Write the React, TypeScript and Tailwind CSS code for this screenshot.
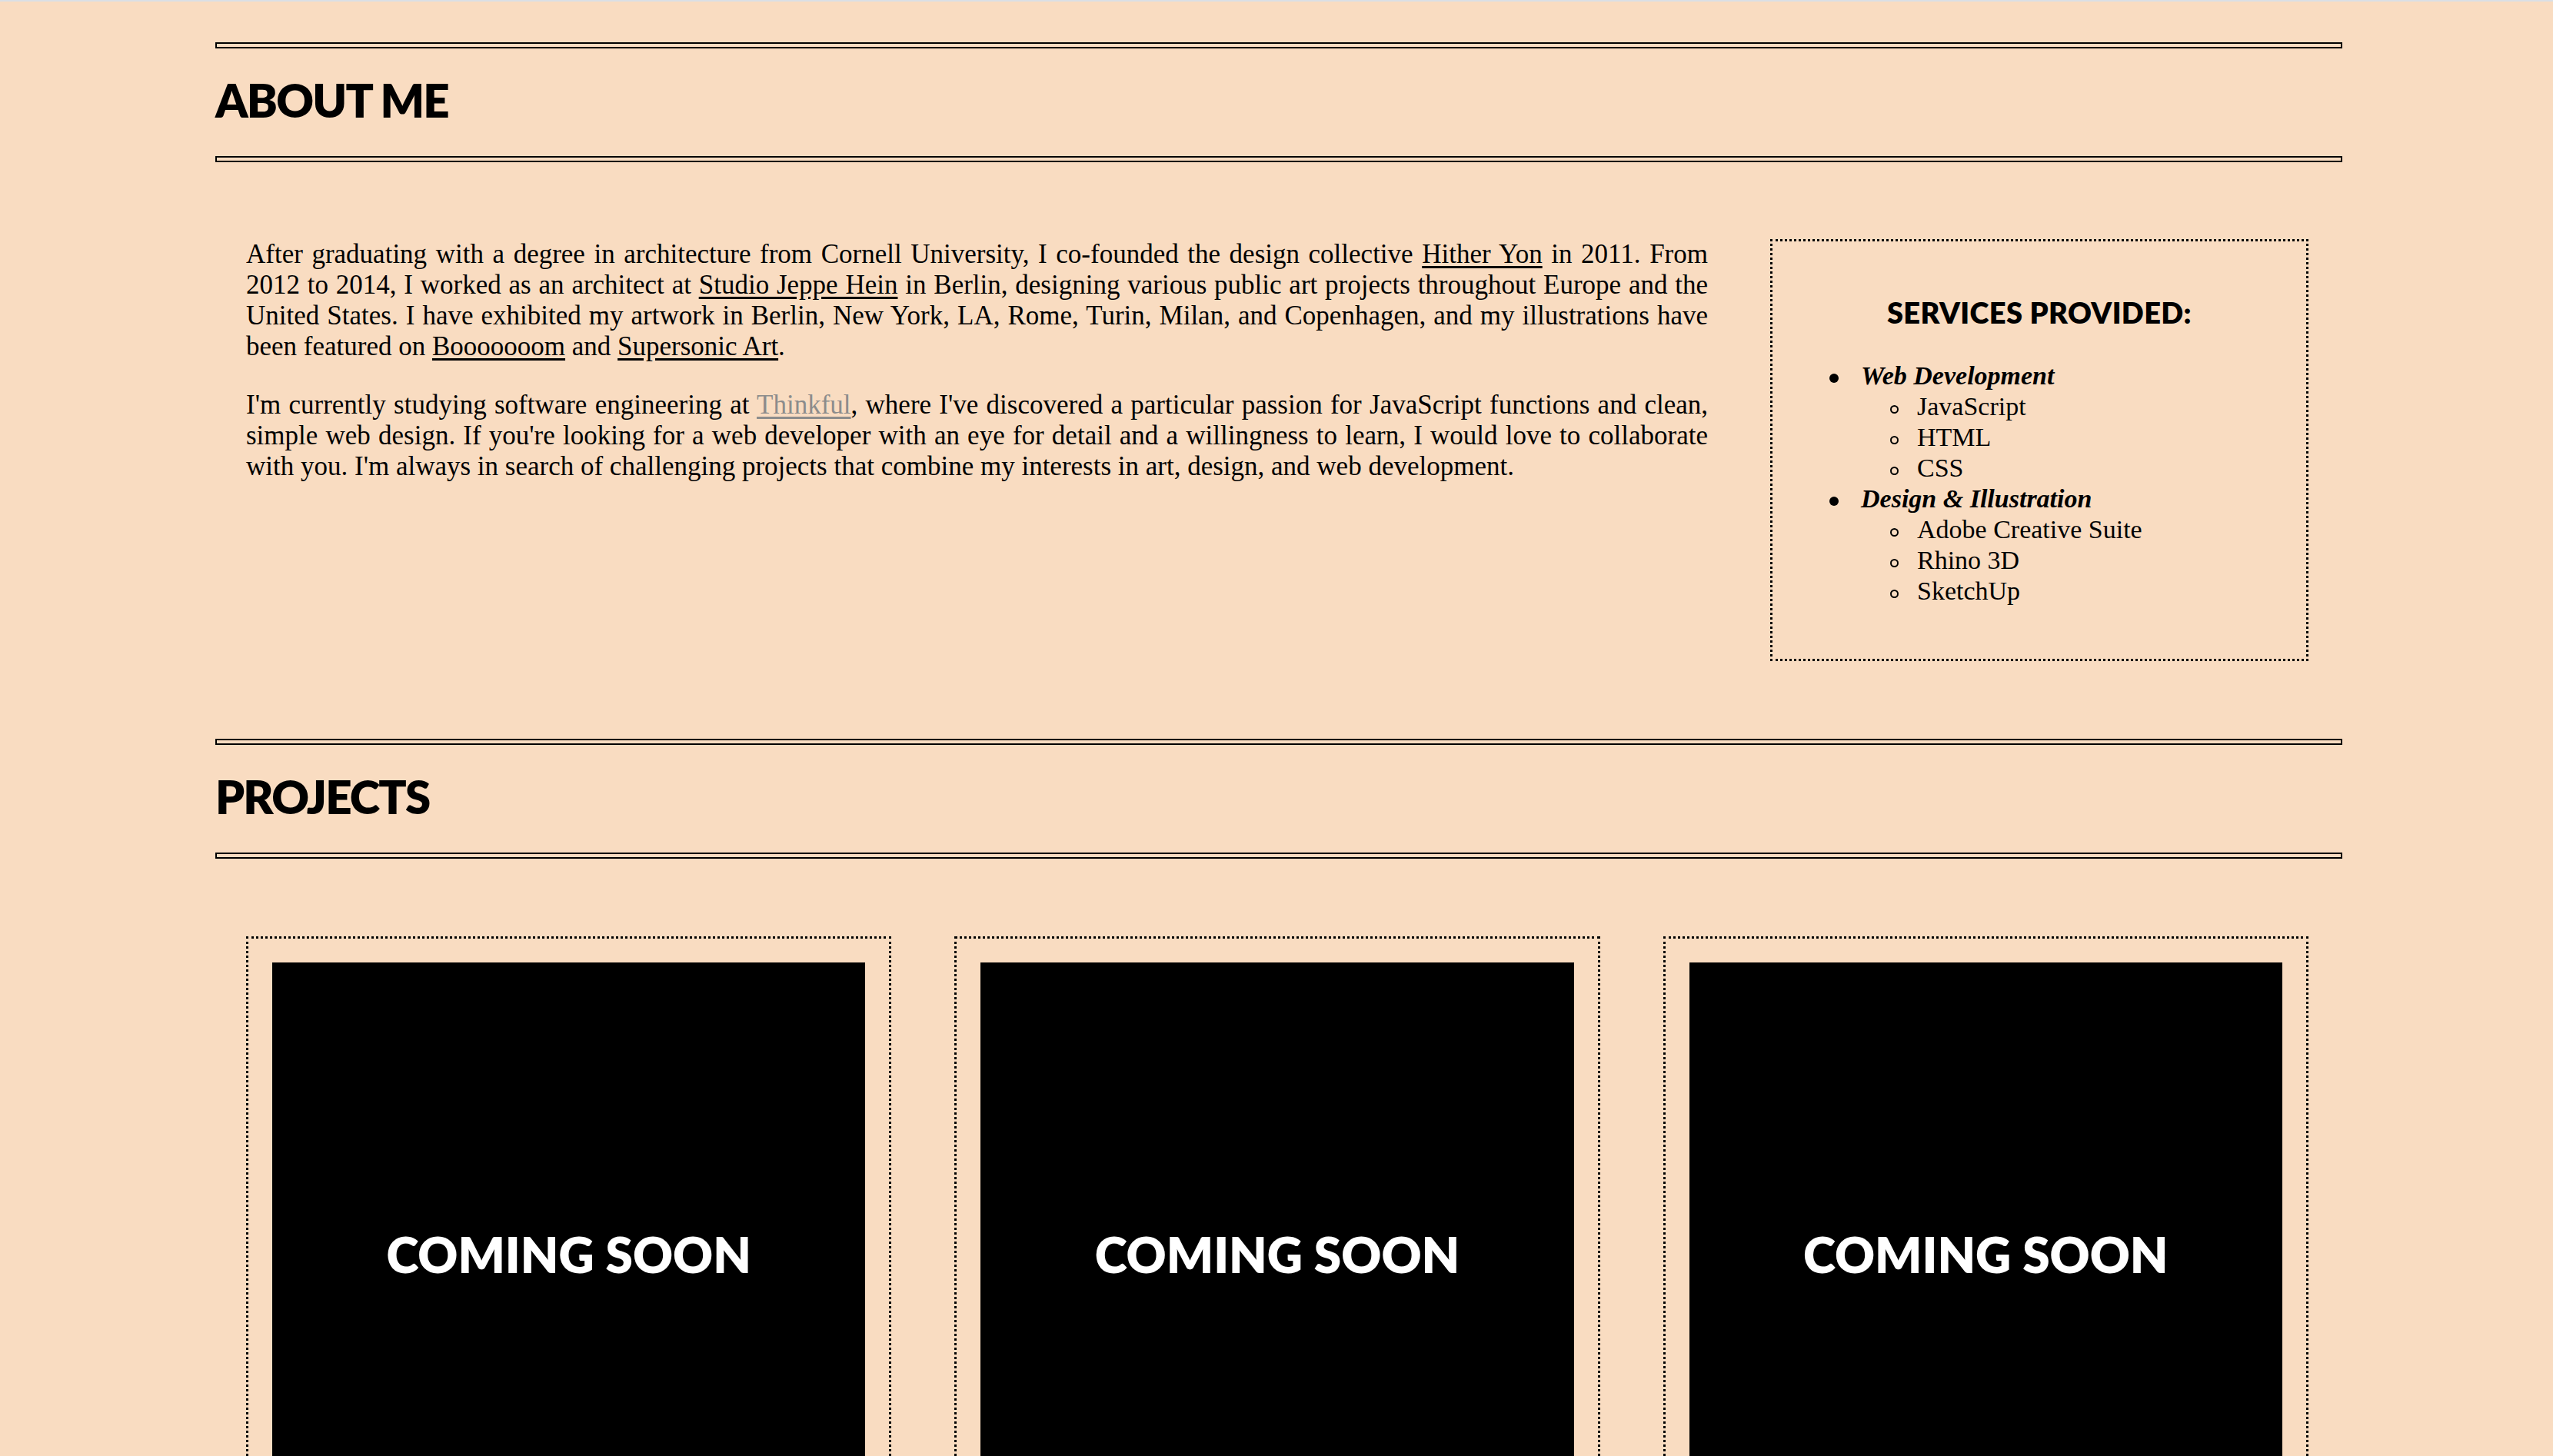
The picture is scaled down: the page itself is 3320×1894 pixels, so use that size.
import React from "react";

const serif = "font-['Liberation_Serif',serif]";
const heading = "font-[Lato,'Open_Sans',sans-serif]";

const Rule = ({ className = "" }: { className?: string }) => (
    <hr className={`h-[8px] w-full border-2 border-black ${className}`} />
);

const SectionTitle = ({ children }: { children: React.ReactNode }) => (
    <>
        <h2 className={`${heading} mt-[37px] text-[60px] leading-none font-extrabold tracking-[-0.03em] text-black`}>
            {children}
        </h2>
        <Rule className="mt-[43px]" />
    </>
);

const services = [
    { title: "Web Development", items: ["JavaScript", "HTML", "CSS"] },
    { title: "Design & Illustration", items: ["Adobe Creative Suite", "Rhino 3D", "SketchUp"] },
];

const ServicesBox = () => (
    <aside className="w-[700px] shrink-0 border-[3px] border-dotted border-black pt-[73px] pb-[68px]">
        <h3 className={`${heading} text-center text-[38px] leading-none font-extrabold tracking-[0.01em] text-black`}>
            SERVICES PROVIDED:
        </h3>
        <ul className={`${serif} mt-[44px] pl-[74px] text-[34px] leading-[40px] text-black`}>
            {services.map((s) => (
                <li key={s.title}>
                    <div className="flex items-center h-[40px]">
                        <span className="w-[12px] h-[12px] rounded-full bg-black mr-[29px] translate-y-[3px]" />
                        <span className="font-bold italic">{s.title}</span>
                    </div>
                    <ul className="pl-[79px]">
                        {s.items.map((it) => (
                            <li key={it} className="flex items-center h-[40px]">
                                <span className="w-[11px] h-[11px] rounded-full border-2 border-black mr-[24px] translate-y-[3px]" />
                                <span>{it}</span>
                            </li>
                        ))}
                    </ul>
                </li>
            ))}
        </ul>
    </aside>
);

const A = ({ children, gray }: { children: React.ReactNode; gray?: boolean }) => (
    <a href="#" className={`underline underline-offset-[4px] ${gray ? "text-[#8c8c8c]" : "text-black"}`}>
        {children}
    </a>
);

const ProjectCard = () => (
    <div className="border-[3px] border-dotted border-black p-[31px]">
        <div className="aspect-square w-full bg-black flex items-center justify-center pb-[12px]">
            <span className={`${heading} text-white text-[64px] leading-none font-extrabold`}>COMING SOON</span>
        </div>
    </div>
);

export default function App() {
    return (
        <div className="min-h-screen bg-[#f9dcc1] overflow-hidden">
            <div className="h-[2px] bg-[#dadfe5]" />
            <main className="ml-[280px] w-[2766px]">
                <Rule className="mt-[53px]" />
                <SectionTitle>ABOUT ME</SectionTitle>

                <section className="mt-[100px] pl-[40px] w-[2722px] flex justify-between">
                    <div className={`${serif} w-[1901px] text-[35px] leading-[40px] text-black text-justify`}>
                        <p>
                            After graduating with a degree in architecture from Cornell University, I co-founded the design
                            collective <A>Hither Yon</A> in 2011. From 2012 to 2014, I worked as an architect at{" "}
                            <A>Studio Jeppe Hein</A> in Berlin, designing various public art projects throughout Europe and
                            the United States. I have exhibited my artwork in Berlin, New York, LA, Rome, Turin, Milan, and
                            Copenhagen, and my illustrations have been featured on <A>Booooooom</A> and{" "}
                            <A>Supersonic Art</A>.
                        </p>
                        <p className="mt-[36px]">
                            I'm currently studying software engineering at <A gray>Thinkful</A>, where I've discovered a
                            particular passion for JavaScript functions and clean, simple web design. If you're looking for
                            a web developer with an eye for detail and a willingness to learn, I would love to collaborate
                            with you. I'm always in search of challenging projects that combine my interests in art,
                            design, and web development.
                        </p>
                    </div>
                    <ServicesBox />
                </section>

                <Rule className="mt-[101px]" />
                <SectionTitle>PROJECTS</SectionTitle>

                <section className="mt-[101px] pl-[40px] w-[2722px] grid grid-cols-3 gap-[82px] pb-[120px]">
                    <ProjectCard />
                    <ProjectCard />
                    <ProjectCard />
                </section>
            </main>
        </div>
    );
}
